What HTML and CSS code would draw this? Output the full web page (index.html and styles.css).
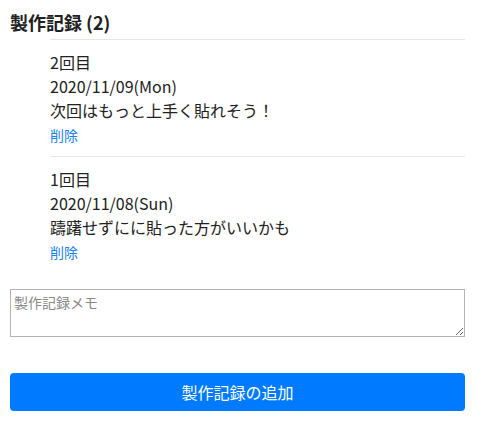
FILE: index.html
```html
<!DOCTYPE html>
<html lang="ja">
<head>
<meta charset="utf-8">
<title>製作記録</title>
<link rel="stylesheet" href="styles.css">
</head>
<body>
<div class="page">
  <h2 class="heading">製作記録 (2)</h2>
  <ul class="records">
    <li class="record">
      <div class="line">2回目</div>
      <div class="line">2020/11/09(Mon)</div>
      <div class="line">次回はもっと上手く貼れそう！</div>
      <div class="delete"><a href="#" class="delete-link">削除</a></div>
    </li>
    <li class="record">
      <div class="line">1回目</div>
      <div class="line">2020/11/08(Sun)</div>
      <div class="line">躊躇せずにに貼った方がいいかも</div>
      <div class="delete"><a href="#" class="delete-link">削除</a></div>
    </li>
  </ul>
  <textarea class="memo" placeholder="製作記録メモ"></textarea>
  <button class="add-btn" type="button">製作記録の追加</button>
</div>
</body>
</html>
```
FILE: styles.css
```css
html, body {
  margin: 0;
  padding: 0;
  background: #fff;
}
body {
  font-family: "Noto Sans CJK JP", "Noto Sans", sans-serif;
  color: #212121;
}
.page {
  padding: 10px 15px 10px 10px;
  display: flex;
  flex-direction: column;
}
.heading {
  margin: 0 0 5px 0;
  font-size: 18px;
  line-height: 24px;
  font-weight: bold;
}
.records {
  list-style: none;
  margin: 0 0 16px 0;
  padding: 0 0 0 40px;
}
.record {
  border-top: 1px solid #e6e6e6;
  padding: 10px 0;
}
.line {
  font-size: 16px;
  line-height: 24px;
}
.delete {
  margin-top: 3px;
  font-size: 14px;
  line-height: 21px;
}
.delete-link {
  color: #1a7ff0;
  text-decoration: none;
}
.memo {
  box-sizing: border-box;
  width: 100%;
  height: 48px;
  margin: 0 0 36px 0;
  padding: 2px 3px;
  border: 1px solid #b3b3b3;
  font-family: "Noto Sans CJK JP", "Noto Sans", sans-serif;
  font-size: 14px;
  line-height: 20px;
  color: #212121;
}
.memo::placeholder {
  color: #8a8a8a;
}
.add-btn {
  box-sizing: border-box;
  width: 100%;
  height: 38px;
  border: none;
  border-radius: 4px;
  background: #007bff;
  color: #fff;
  font-family: "Noto Sans CJK JP", "Noto Sans", sans-serif;
  font-size: 16px;
  line-height: 24px;
  padding: 0;
}
```
